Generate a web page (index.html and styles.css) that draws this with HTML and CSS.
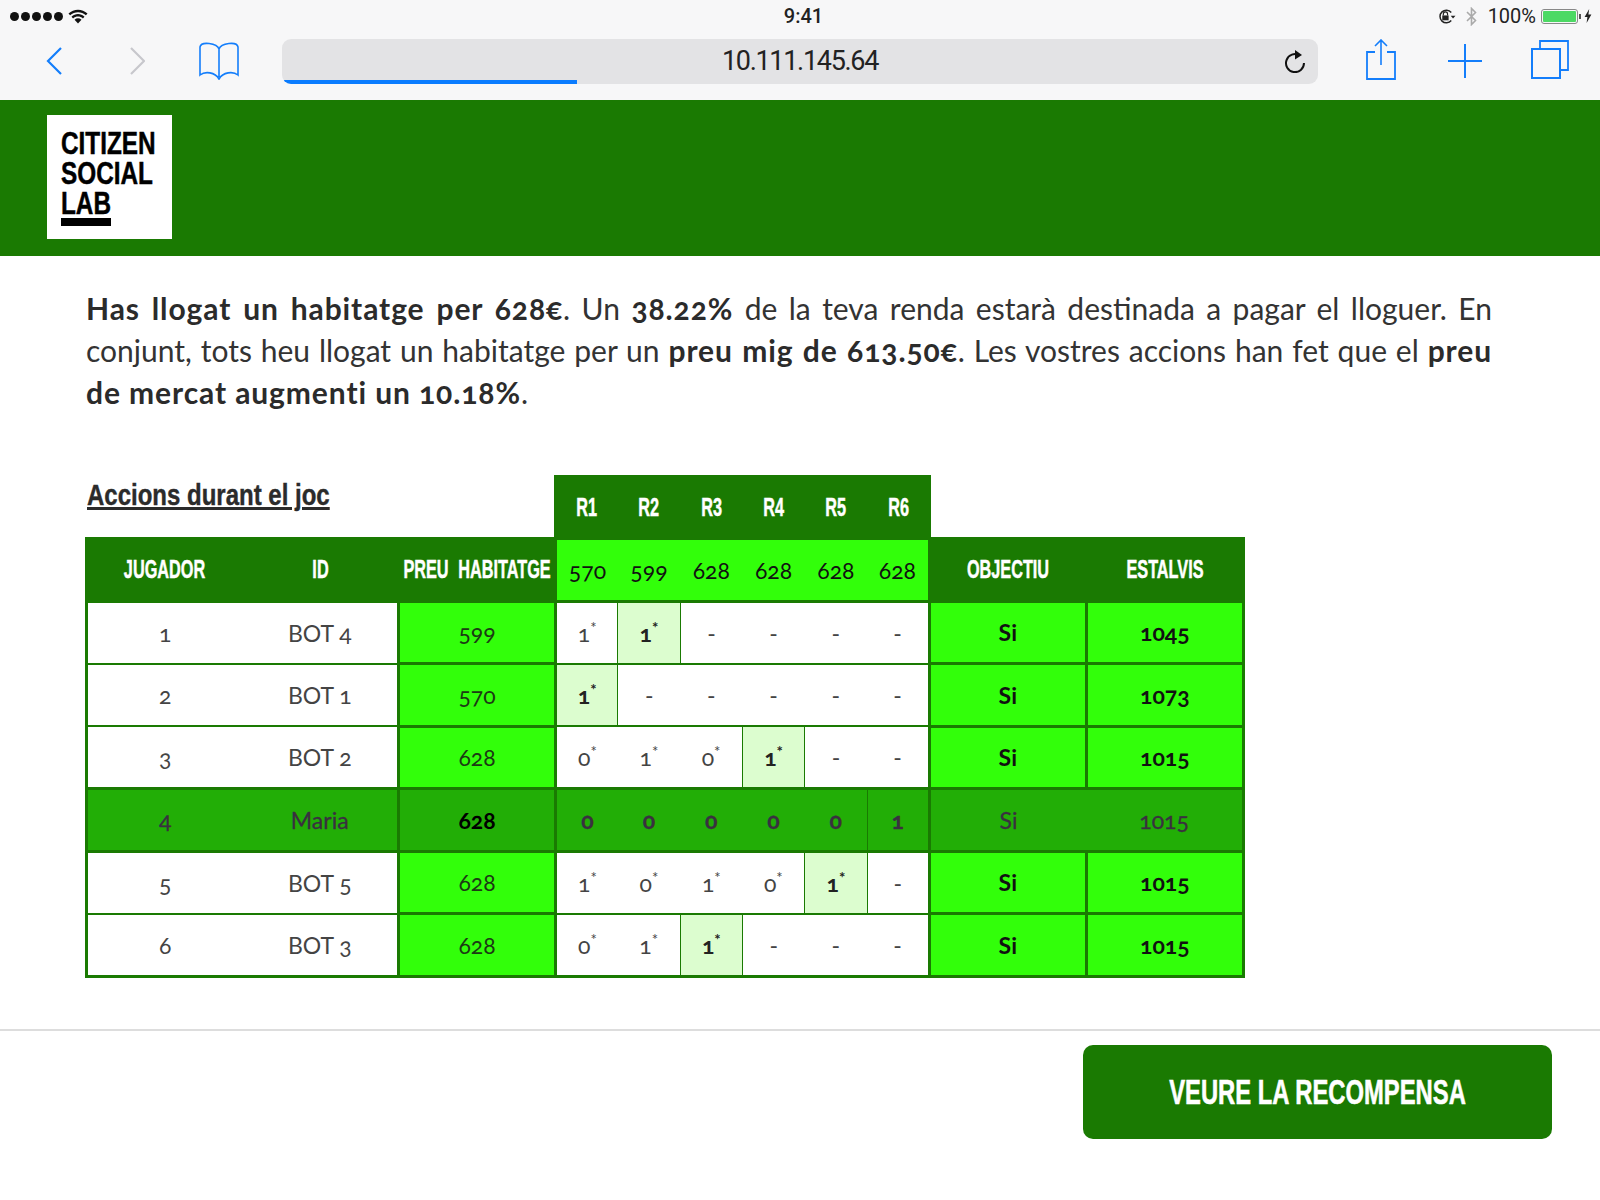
FILE: index.html
```html
<!DOCTYPE html>
<html lang="ca">
<head>
    <meta charset="UTF-8">
    <meta name="viewport" content="width=device-width, initial-scale=1.0">
    <title>Accions durant el joc</title>
    <link rel="stylesheet" href="styles.css">
</head>
<body>
    <div class="browser">
        <div class="status-bar">
            <div class="status-left">
                <span class="dot"></span><span class="dot"></span><span class="dot"></span><span class="dot"></span><span class="dot"></span>
                <svg class="wifi" viewBox="0 0 20 15"><path d="M0.5 4.6C5.8 -0.5 14.2 -0.5 19.5 4.6L17.9 6.3C13.4 2.1 6.6 2.1 2.1 6.3Z"/><path d="M3.5 7.7C7.2 4.2 12.8 4.2 16.5 7.7L14.9 9.4C12.1 6.8 7.9 6.8 5.1 9.4Z"/><path d="M6.5 10.7C8.6 8.9 11.4 8.9 13.5 10.7L10 14.6Z"/></svg>
            </div>
            <div class="status-time">9:41</div>
            <div class="status-right">
                <svg class="lock" viewBox="0 0 18 14"><path d="M13.5 3.2A6 6 0 1 0 13.5 10.8" fill="none" stroke="#222" stroke-width="1.4"/><path d="M13 6.2L17.5 6.2L15.2 9Z" fill="#222"/><rect x="5" y="6" width="6" height="4.6" fill="#222"/><path d="M6 6V4.6A2 2 0 0 1 10 4.6V6" fill="none" stroke="#222" stroke-width="1.1"/></svg>
                <svg class="bluetooth" viewBox="0 0 13 19"><path d="M2 5L10.5 13.5L6.5 17.5V1.5L10.5 5.5L2 14" fill="none" stroke="#aaa" stroke-width="1.6"/></svg>
                <span class="battery-text">100%</span>
                <span class="battery"><span class="battery-fill"></span></span>
                <span class="battery-cap"></span>
                <svg class="bolt" viewBox="0 0 8 14"><path d="M5.2 0L0.6 8H3.4L2.6 14L7.4 5.6H4.4Z" fill="#222"/></svg>
            </div>
        </div>
        <div class="toolbar">
            <svg class="tool-back" viewBox="0 0 16 28"><path d="M15 1L2 14L15 27" fill="none" stroke="#147efb" stroke-width="2.2"/></svg>
            <svg class="tool-forward" viewBox="0 0 15 28"><path d="M1 1L14 14L1 27" fill="none" stroke="#c7c7cc" stroke-width="2.2"/></svg>
            <svg class="tool-book" viewBox="0 0 40 38"><path d="M20 7C18 1 2 -1 1 5V33C6 29 16 30 20 37C24 30 34 29 39 33V5C38 -1 22 1 20 7V35" fill="none" stroke="#147efb" stroke-width="1.6"/></svg>
            <div class="address">
                <div class="address-row">
                    <span class="address-url">10.111.145.64</span>
                    <svg class="reload" viewBox="0 0 22 24"><path d="M15.5 6.3A9 9 0 1 0 20 14" fill="none" stroke="#111" stroke-width="2"/><path d="M11 1L18 6L11 10.5Z" fill="#111"/></svg>
                </div>
                <div class="address-progress"></div>
            </div>
            <svg class="tool-share" viewBox="0 0 30 41"><path d="M9 13H1V40H29V13H21" fill="none" stroke="#147efb" stroke-width="1.8"/><path d="M15 26V1M9 7L15 1L21 7" fill="none" stroke="#147efb" stroke-width="1.6"/></svg>
            <svg class="tool-plus" viewBox="0 0 34 34"><path d="M17 0V34M0 17H34" fill="none" stroke="#147efb" stroke-width="2"/></svg>
            <svg class="tool-tabs" viewBox="0 0 38 39"><path d="M9 9V1H37V30H29" fill="none" stroke="#147efb" stroke-width="1.8"/><rect x="1" y="9" width="28" height="29" fill="none" stroke="#147efb" stroke-width="2"/></svg>
        </div>
    </div>

    <header class="site-header">
        <div class="logo">
            <div class="logo-text">CITIZEN<br>SOCIAL<br>LAB</div>
            <div class="logo-bar"></div>
        </div>
    </header>

    <main class="content">
        <p class="summary">
            <strong>Has llogat un habitatge per 628€</strong>. Un <strong>38.22%</strong> de la teva renda estarà destinada a pagar el lloguer. En conjunt, tots heu llogat un habitatge per un <strong>preu mig de 613.50€</strong>. Les vostres accions han fet que el <strong>preu de mercat augmenti un 10.18%</strong>.
        </p>

        <table class="results">
            <colgroup>
                <col class="col-player"><col class="col-id"><col class="col-price">
                <col class="col-round"><col class="col-round"><col class="col-round"><col class="col-round"><col class="col-round"><col class="col-round">
                <col class="col-goal"><col class="col-savings">
            </colgroup>
            <thead>
                <tr class="round-row">
                    <td colspan="3" class="title-cell"><h2>Accions durant el joc</h2></td>
                    <th><span class="cond">R1</span></th><th><span class="cond">R2</span></th><th><span class="cond">R3</span></th><th><span class="cond">R4</span></th><th><span class="cond">R5</span></th><th><span class="cond">R6</span></th>
                    <td colspan="2" class="blank-cell"></td>
                </tr>
                <tr class="head-row">
                    <th><span class="cond">JUGADOR</span></th><th><span class="cond">ID</span></th><th><span class="cond">PREU HABITATGE</span></th>
                    <td class="market">570</td><td class="market">599</td><td class="market">628</td><td class="market">628</td><td class="market">628</td><td class="market">628</td>
                    <th><span class="cond">OBJECTIU</span></th><th><span class="cond">ESTALVIS</span></th>
                </tr>
            </thead>
            <tbody>
                <tr>
                    <td>1</td><td>BOT 4</td><td class="green">599</td>
                    <td class="first">1<sup>*</sup></td><td class="hit">1<sup>*</sup></td><td>-</td><td>-</td><td>-</td><td class="last">-</td>
                    <td class="green strong">Si</td><td class="green strong">1045</td>
                </tr>
                <tr>
                    <td>2</td><td>BOT 1</td><td class="green">570</td>
                    <td class="first hit">1<sup>*</sup></td><td>-</td><td>-</td><td>-</td><td>-</td><td class="last">-</td>
                    <td class="green strong">Si</td><td class="green strong">1073</td>
                </tr>
                <tr>
                    <td>3</td><td>BOT 2</td><td class="green">628</td>
                    <td class="first">0<sup>*</sup></td><td>1<sup>*</sup></td><td>0<sup>*</sup></td><td class="hit">1<sup>*</sup></td><td>-</td><td class="last">-</td>
                    <td class="green strong">Si</td><td class="green strong">1015</td>
                </tr>
                <tr class="me">
                    <td>4</td><td>Maria</td><td class="edge strong black">628</td>
                    <td class="first strong">0</td><td class="strong">0</td><td class="strong">0</td><td class="strong">0</td><td class="strong">0</td><td class="last strong split">1</td>
                    <td class="edge-left">Si</td><td class="plain-right">1015</td>
                </tr>
                <tr>
                    <td>5</td><td>BOT 5</td><td class="green">628</td>
                    <td class="first">1<sup>*</sup></td><td>0<sup>*</sup></td><td>1<sup>*</sup></td><td>0<sup>*</sup></td><td class="hit">1<sup>*</sup></td><td class="last">-</td>
                    <td class="green strong">Si</td><td class="green strong">1015</td>
                </tr>
                <tr>
                    <td>6</td><td>BOT 3</td><td class="green">628</td>
                    <td class="first">0<sup>*</sup></td><td>1<sup>*</sup></td><td class="hit">1<sup>*</sup></td><td>-</td><td>-</td><td class="last">-</td>
                    <td class="green strong">Si</td><td class="green strong">1015</td>
                </tr>
            </tbody>
        </table>
    </main>

    <footer class="actions">
        <button class="reward-button"><span class="reward-label">VEURE LA RECOMPENSA</span></button>
    </footer>
</body>
</html>
```

FILE: styles.css
```css
body {
    margin: 0;
    background: #fff;
    font-family: "Lato", sans-serif;
    color: #333;
}

/* browser chrome */
.browser {
    height: 100px;
    background: #f7f7f8;
}
.status-bar {
    display: flex;
    align-items: center;
    height: 32px;
    color: #222;
}
.status-left, .status-right {
    flex: 1;
    display: flex;
    align-items: center;
}
.status-left {
    padding-left: 10px;
}
.status-right {
    justify-content: flex-end;
    padding-right: 8px;
}
.status-time {
    margin-left: 5px;
    font: 500 20px "Roboto", sans-serif;
}
.dot {
    width: 9px;
    height: 9px;
    margin-right: 2px;
    border-radius: 50%;
    background: #111;
}
.wifi {
    width: 20px;
    height: 15px;
    margin-left: 3px;
    fill: #111;
}
.lock {
    width: 19px;
    height: 15px;
    margin-right: 9px;
}
.bluetooth {
    width: 13px;
    height: 19px;
    margin-right: 10px;
}
.battery-text {
    font: 400 20px "Roboto", sans-serif;
    margin-right: 5px;
}
.battery {
    width: 37px;
    height: 15px;
    padding: 1px;
    border: 1px solid #888;
    border-radius: 3px;
    box-sizing: border-box;
}
.battery-fill {
    display: block;
    height: 100%;
    background: #4cd964;
    border-radius: 1px;
}
.battery-cap {
    width: 2px;
    height: 5px;
    margin: 0 3px 0 1px;
    background: #555;
}
.bolt {
    width: 8px;
    height: 14px;
}
.toolbar {
    display: flex;
    align-items: center;
    height: 68px;
    padding: 0 0 10px 46px;
    box-sizing: border-box;
}
.tool-back {
    width: 16px;
    height: 28px;
    margin-right: 68px;
}
.tool-forward {
    width: 15px;
    height: 28px;
    margin-right: 54px;
}
.tool-book {
    width: 40px;
    height: 38px;
    margin-right: 43px;
}
.address {
    display: flex;
    flex-direction: column;
    width: 1036px;
    height: 45px;
    margin-right: 48px;
    background: #e3e3e5;
    border-radius: 9px;
    overflow: hidden;
}
.address-row {
    flex: 1;
    position: relative;
    display: flex;
    align-items: center;
    justify-content: center;
}
.address-url {
    margin-top: 3px;
    font: 400 27px "Roboto", sans-serif;
    letter-spacing: -1.3px;
    color: #222;
}
.reload {
    position: absolute;
    right: 12px;
    top: 10px;
    width: 22px;
    height: 24px;
}
.address-progress {
    width: 295px;
    height: 4px;
    background: #0a7cff;
}
.tool-share {
    width: 30px;
    height: 41px;
    margin: 0 52px 3px 0;
}
.tool-plus {
    width: 34px;
    height: 34px;
    margin-right: 49px;
}
.tool-tabs {
    width: 38px;
    height: 39px;
    margin-bottom: 3px;
}

/* green header */
.site-header {
    height: 156px;
    padding: 15px 0 0 47px;
    box-sizing: border-box;
    background: #1a7a02;
}
.logo {
    width: 125px;
    height: 124px;
    padding: 13px 0 0 14px;
    box-sizing: border-box;
    background: #fff;
}
.logo-text {
    font: 700 32px/30px "Liberation Sans", sans-serif;
    color: #000;
    white-space: nowrap;
    -webkit-text-stroke: 0.5px #000;
    transform: scaleX(0.76);
    transform-origin: left;
}
.logo-bar {
    width: 50px;
    height: 8px;
    background: #000;
}

/* summary text */
.content {
    padding: 31px 108px 0 86px;
}
.summary {
    margin: 0 0 62px;
    font-size: 30px;
    line-height: 42px;
    text-align: justify;
    color: #333;
    font-variant-numeric: oldstyle-nums;
}
.summary strong {
    color: #2b2b2b;
    letter-spacing: 0.9px;
}

/* results table */
.results {
    width: 1157px;
    margin-left: -1px;
    border-collapse: collapse;
    table-layout: fixed;
    font-size: 23px;
    font-variant-numeric: oldstyle-nums;
    text-align: center;
}
.col-player, .col-id {
    width: 156px;
}
.col-price {
    width: 157px;
}
.col-round {
    width: 62.3px;
}
.col-goal {
    width: 157px;
}
.col-savings {
    width: 157px;
}
.results th {
    background: #1a7a02;
    color: #fff;
    font: 700 25px "Liberation Sans", sans-serif;
    border: 3px solid #1a7a02;
    padding: 0;
}
.cond {
    display: block;
    margin: 0 -60px;
    white-space: nowrap;
    word-spacing: 8px;
    -webkit-text-stroke: 0.5px #fff;
    transform: scaleX(0.65);
}
.results td {
    height: 59.5px;
    padding: 0;
    color: #444;
    background: #fff;
    border-top: 2px solid #1a7a02;
    border-bottom: 2px solid #1a7a02;
}
.results thead td {
    height: 60px;
}
.results tbody tr td:first-child {
    border-left: 3px solid #1a7a02;
}
.results tbody tr td:last-child {
    border-right: 3px solid #1a7a02;
}
.results tbody tr:last-child td {
    border-bottom-width: 3px;
}
.results .title-cell, .results .blank-cell {
    border: none;
    border-bottom: 3px solid #1a7a02;
    text-align: left;
    vertical-align: top;
}
.title-cell h2 {
    display: inline-block;
    margin: 1px 0 0;
    font: 700 30px "Liberation Sans", sans-serif;
    color: #2b2b2b;
    text-decoration: underline;
    white-space: nowrap;
    -webkit-text-stroke: 0.4px #2b2b2b;
    transform: scaleX(0.8);
    transform-origin: left;
}
.results .market {
    background: #32ff0a;
    color: #111;
    border: 3px solid #1a7a02;
    border-left: none;
    border-right: none;
}
.results .green {
    background: #32ff0a;
    color: #1c3a14;
    border: 3px solid #1a7a02;
}
.results .strong {
    font-weight: 700;
    color: #111;
}
.results .first {
    border-left: 3px solid #1a7a02;
}
.results .last {
    border-right: 3px solid #1a7a02;
}
.results .hit {
    background: #dcfdcf;
    font-weight: 700;
    color: #222;
    border-left: 1px solid #1a7a02;
    border-right: 1px solid #1a7a02;
}
.results .first.hit {
    border-left: 3px solid #1a7a02;
}
.results sup {
    font-size: 15px;
    line-height: 0;
}
.results .me td {
    background: #22ae06;
    color: #3a3040;
    -webkit-text-stroke: 0.3px #3a3040;
    border-top-width: 3px;
    border-bottom-width: 3px;
}
.results .me .edge {
    border-left: 3px solid #1a7a02;
    border-right: 3px solid #1a7a02;
}
.results .me .split {
    border-left: 1px solid #1a7a02;
}
.results .me .strong {
    font-weight: 700;
}
.results .me .black.strong {
    color: #000;
    -webkit-text-stroke: 0;
}
.results .me .edge-left {
    border-left: 3px solid #1a7a02;
}

/* footer */
.actions {
    display: flex;
    justify-content: flex-end;
    margin-top: 51px;
    padding: 14px 48px 0 0;
    border-top: 2px solid #ddd;
}
.reward-button {
    width: 469px;
    height: 94px;
    border: none;
    border-radius: 10px;
    background: #1a7a02;
    color: #fff;
    font: 700 35px "Liberation Sans", sans-serif;
}
.reward-label {
    display: block;
    margin: 0 -40px;
    white-space: nowrap;
    -webkit-text-stroke: 0.6px #fff;
    transform: scaleX(0.68);
}
```
